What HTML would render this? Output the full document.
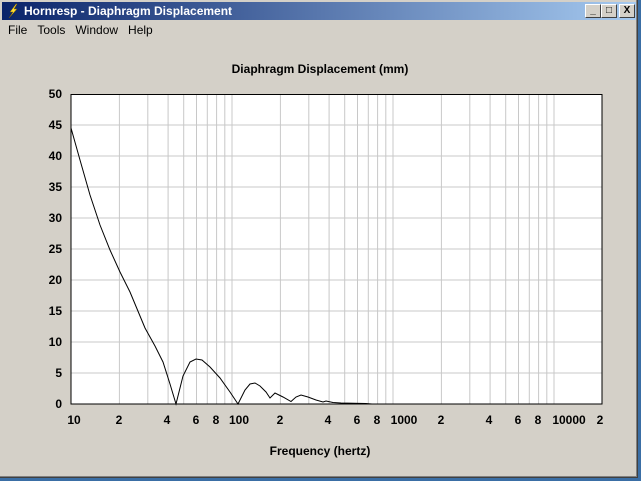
<!DOCTYPE html>
<html><head><style>
body{margin:0;width:641px;height:481px;overflow:hidden;background:#3a6ea5;font-family:"Liberation Sans",sans-serif;}
.win{position:absolute;left:0;top:0;width:637px;height:477px;background:#d4d0c8;border-right:1px solid #404040;border-bottom:1px solid #404040;box-shadow:inset -1px -1px #808080;}
.title{position:absolute;left:2px;top:2px;width:634px;height:18px;background:linear-gradient(to right,#0a246a,#a6caf0);color:#fff;font-weight:bold;font-size:12px;line-height:18px;}
.title span{position:absolute;left:22px;top:0;}
.btn{position:absolute;top:4px;width:14px;height:12px;background:#d4d0c8;border:1px solid;border-color:#fff #404040 #404040 #fff;font-size:10px;line-height:12px;text-align:center;color:#000;font-weight:bold;}
.menu{position:absolute;top:23px;left:8px;font-size:12px;}
.menu span{margin-right:10px;}
</style></head><body>
<div class="win">
<div class="title"><svg style="position:absolute;left:4px;top:1px" width="14" height="16"><path d="M10 1 L4 9 L7 9 L3 15 L11 6 L8 6 L11 1Z" fill="#ffe030" stroke="#806000" stroke-width="0.5"/></svg><span>Hornresp - Diaphragm Displacement</span></div>
<div class="btn" style="left:585px">_</div>
<div class="btn" style="left:601px">□</div>
<div class="btn" style="left:619px">X</div>
<div class="menu"><span>File</span><span>Tools</span><span>Window</span><span>Help</span></div>
<svg style="position:absolute;left:0;top:0" width="641" height="481" font-family="Liberation Sans,sans-serif" font-weight="bold" font-size="12">
<text x="320" y="73" text-anchor="middle">Diaphragm Displacement (mm)</text>
<rect x="71" y="94" width="531" height="310" fill="#fff"/>
<g stroke="#c8c8c8" stroke-width="1">
<path d="M119.4 94V404M147.8 94V404M168.1 94V404M183.7 94V404M196.5 94V404M207.3 94V404M216.6 94V404M224.8 94V404M232 94V404M280.4 94V404M308.8 94V404M329.1 94V404M344.7 94V404M357.5 94V404M368.3 94V404M377.6 94V404M385.8 94V404M393 94V404M441.4 94V404M469.8 94V404M490.1 94V404M505.7 94V404M518.5 94V404M529.3 94V404M538.6 94V404M546.8 94V404M554 94V404"/>
<path d="M71 125H602M71 156H602M71 187H602M71 218H602M71 249H602M71 280H602M71 311H602M71 342H602M71 373H602"/>
</g>
<rect x="71" y="94.5" width="531" height="309.5" fill="none" stroke="#000"/>
<polyline fill="none" stroke="#000" points="71,128 80,160 90,195 100,225 110,250 120,272 130,292 145,328 155,346 163,362 170,384 176,404 183,376 190,362 196,359 202,360 210,367 220,378 230,392 238,404 245,390 250,384 255,383 260,386 266,392 270,398 275,393 283,397 291,401.5 296,397 301,395 308,397 316,400 323,402 326,401 333,402.5 341,403 366,403.5 372,404"/>
<g text-anchor="end">
<text x="62" y="98">50</text><text x="62" y="129">45</text><text x="62" y="160">40</text><text x="62" y="191">35</text><text x="62" y="222">30</text><text x="62" y="253">25</text><text x="62" y="284">20</text><text x="62" y="315">15</text><text x="62" y="346">10</text><text x="62" y="377">5</text><text x="62" y="408">0</text>
</g>
<g text-anchor="middle">
<text x="74" y="424">10</text><text x="119" y="424">2</text><text x="167" y="424">4</text><text x="196" y="424">6</text><text x="216" y="424">8</text><text x="239" y="424">100</text><text x="280" y="424">2</text><text x="328" y="424">4</text><text x="357" y="424">6</text><text x="377" y="424">8</text><text x="404" y="424">1000</text><text x="441" y="424">2</text><text x="489" y="424">4</text><text x="518" y="424">6</text><text x="538" y="424">8</text><text x="569" y="424">10000</text><text x="600" y="424">2</text>
<text x="320" y="455">Frequency (hertz)</text>
</g>
</svg>
</div>
</body></html>
